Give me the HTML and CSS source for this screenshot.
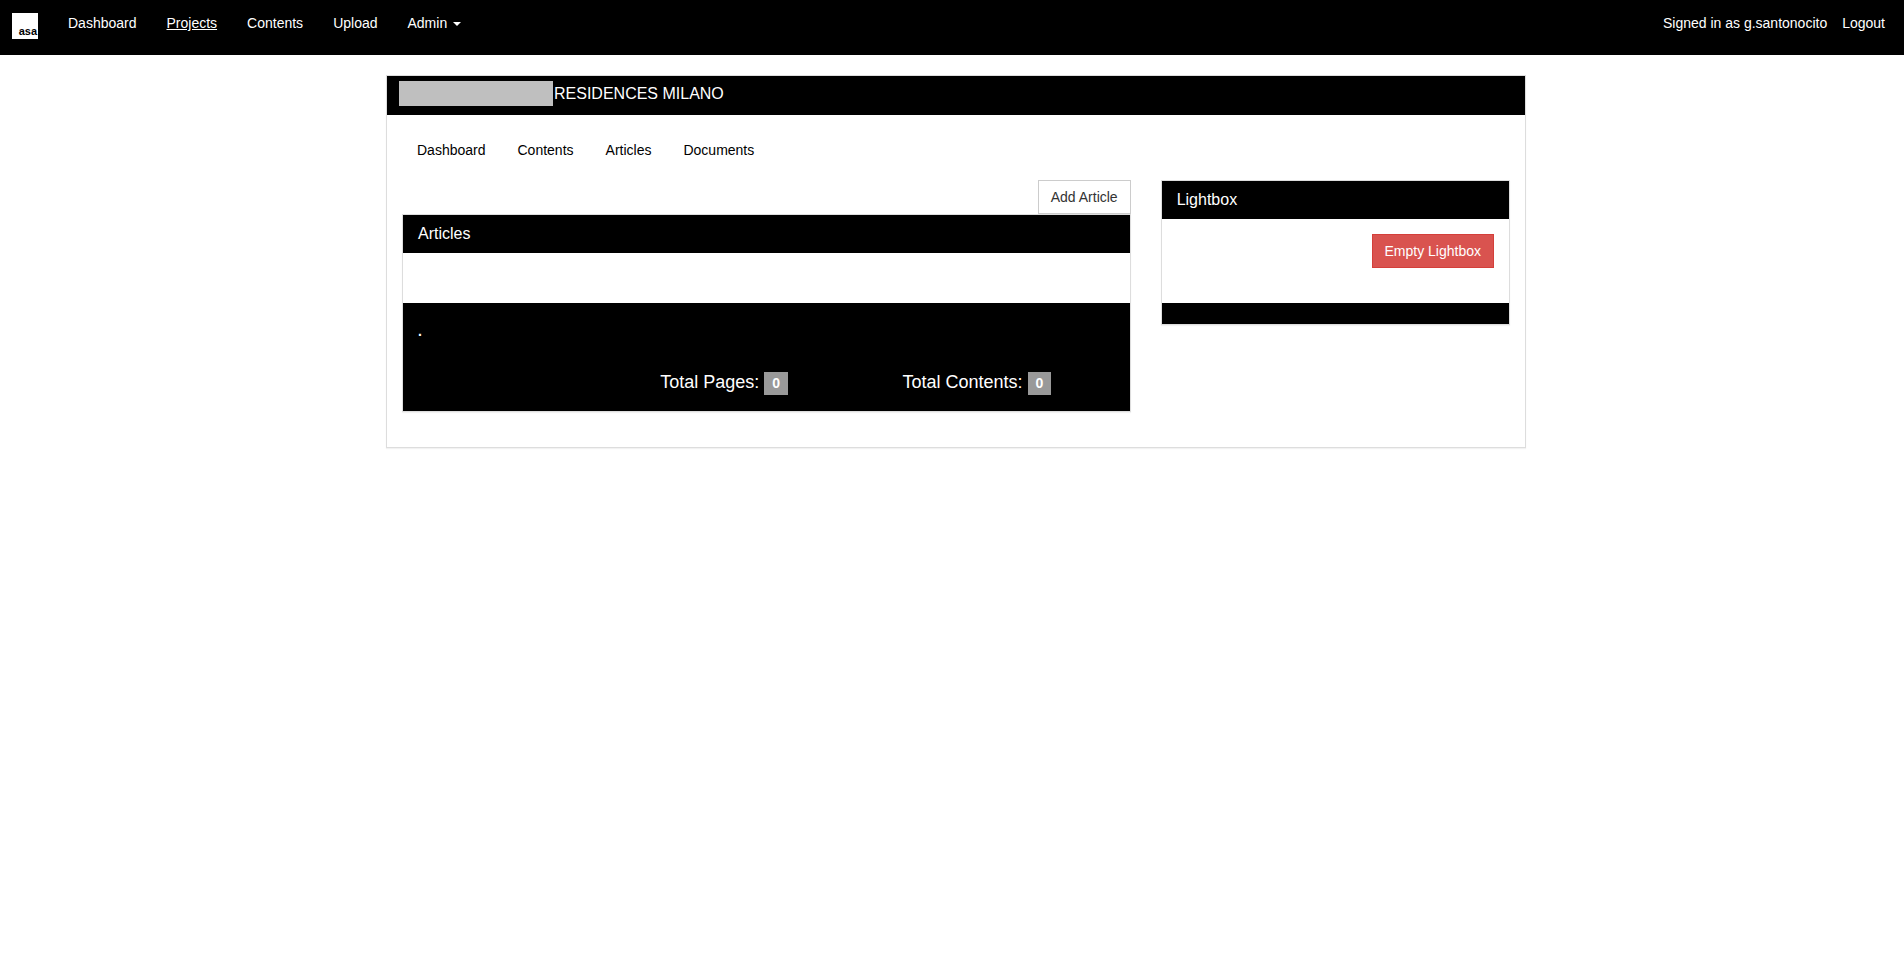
FILE: index.html
```html
<!DOCTYPE html>
<html lang="en">
<head>
<meta charset="utf-8">
<title>Residences Milano - Articles</title>
<link rel="stylesheet" href="styles.css">
</head>
<body>
<header class="navbar">
  <a class="brand" href="#">asa</a>
  <nav class="navbar-nav">
    <a href="#">Dashboard</a>
    <a class="active" href="#">Projects</a>
    <a href="#">Contents</a>
    <a href="#">Upload</a>
    <a href="#">Admin <span class="caret"></span></a>
  </nav>
  <div class="navbar-user">
    <span>Signed in as g.santonocito</span>
    <a href="#">Logout</a>
  </div>
</header>
<main class="page">
  <section class="panel">
    <div class="project-heading">
      <span class="redacted"></span>
      <h1 class="panel-title">RESIDENCES MILANO</h1>
    </div>
    <div class="panel-body">
      <nav class="pills">
        <a href="#">Dashboard</a>
        <a href="#">Contents</a>
        <a href="#">Articles</a>
        <a href="#">Documents</a>
      </nav>
      <div class="row">
        <div class="col">
          <div class="actions"><button class="btn" type="button">Add Article</button></div>
          <section class="panel">
            <div class="panel-heading"><h2 class="panel-title">Articles</h2></div>
            <div class="panel-body articles-body"></div>
            <div class="panel-footer totals-footer">
              <p class="note">.</p>
              <div class="totals">
                <h4 class="total">Total Pages: <span class="label">0</span></h4>
                <h4 class="total">Total Contents: <span class="label">0</span></h4>
              </div>
            </div>
          </section>
        </div>
        <div class="col">
          <section class="panel">
            <div class="panel-heading"><h2 class="panel-title">Lightbox</h2></div>
            <div class="panel-body">
              <div class="actions lightbox-actions"><button class="btn btn-danger" type="button">Empty Lightbox</button></div>
            </div>
            <div class="panel-footer"></div>
          </section>
        </div>
      </div>
    </div>
  </section>
</main>
</body>
</html>
```

FILE: styles.css
```css
* {
  box-sizing: border-box;
}

body {
  margin: 0;
  background: #fff;
  color: #333;
  font-family: "Liberation Sans", Arial, sans-serif;
  font-size: 14px;
  line-height: 20px;
}

a {
  color: inherit;
  text-decoration: none;
}

h1, h2, h4, p {
  margin: 0;
}

.navbar {
  display: flex;
  align-items: flex-start;
  min-height: 55px;
  padding: 13px 19px 0 12px;
  background: #000;
  color: #fff;
}

.brand {
  display: flex;
  align-items: flex-end;
  justify-content: flex-end;
  width: 26px;
  height: 26px;
  margin-right: 15px;
  padding: 0 1px 2px 0;
  background: #fff;
  color: #000;
  font-size: 11px;
  font-weight: bold;
  line-height: 12px;
}

.navbar-nav {
  display: flex;
  flex: 1;
}

.navbar-nav a {
  padding: 0 15px;
}

.navbar-nav .active {
  text-decoration: underline;
}

.caret {
  display: inline-block;
  margin-left: 2px;
  border-top: 4px solid;
  border-right: 4px solid transparent;
  border-left: 4px solid transparent;
  vertical-align: middle;
}

.navbar-user {
  display: flex;
  gap: 15px;
}

.page {
  max-width: 1148px;
  margin: 20px auto 0;
  padding-left: 8px;
}

.panel {
  margin-bottom: 20px;
  border: 1px solid #ddd;
  background: #fff;
  box-shadow: 0 1px 1px rgba(0, 0, 0, 0.05);
}

.panel-title {
  font-size: 16px;
  font-weight: normal;
  line-height: 18px;
}

.panel-heading {
  padding: 10px 15px;
  background: #000;
  color: #fff;
}

.project-heading {
  display: flex;
  gap: 1px;
  padding: 5px 12px 9px;
  background: #000;
  color: #fff;
}

.project-heading .panel-title {
  padding-top: 4px;
}

.redacted {
  width: 154px;
  height: 25px;
  background: #bfbfbf;
}

.panel-body {
  padding: 15px;
}

.pills {
  display: flex;
  gap: 2px;
  margin-bottom: 10px;
  color: #000;
}

.pills a {
  padding: 10px 15px;
}

.row {
  display: grid;
  grid-template-columns: 2fr 1fr;
  margin: 0 -15px;
}

.col {
  padding: 0 15px;
}

.actions {
  display: flex;
  justify-content: flex-end;
}

.btn {
  padding: 6px 12px;
  border: 1px solid #ccc;
  background: #fff;
  color: #333;
  font: inherit;
}

.btn-danger {
  border-color: #d43f3a;
  background: #d9534f;
  color: #fff;
}

.lightbox-actions {
  margin-bottom: 20px;
}

.articles-body {
  min-height: 50px;
}

.panel-footer {
  min-height: 21px;
  background: #000;
  color: #fff;
}

.totals-footer {
  padding: 18px 15px 19px;
}

.note {
  font-weight: bold;
}

.totals {
  display: grid;
  grid-template-columns: repeat(3, 1fr);
  margin: 31px -15px 0;
}

.total {
  padding: 0 15px;
  font-size: 18px;
  font-weight: normal;
  line-height: 20px;
}

.total:first-child {
  grid-column-start: 2;
}

.label {
  padding: 3px 8px 4px;
  background: #999;
  font-size: 14px;
  font-weight: bold;
  line-height: 14px;
}
```
